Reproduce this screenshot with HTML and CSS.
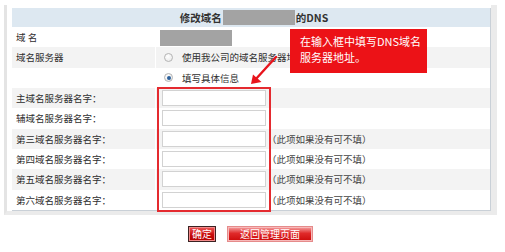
FILE: index.html
```html
<!DOCTYPE html>
<html lang="zh-CN">
<head>
<meta charset="utf-8">
<title>修改域名的DNS</title>
<link rel="stylesheet" href="styles.css">
</head>
<body>
<div class="page">
  <div class="frame">
    <div class="dns">
      <div class="head">修改域名<span class="redact head-redact"></span>的DNS</div>

      <div class="lbl">域 名</div>
      <div class="val"><span class="redact name-redact"></span></div>

      <div class="lbl alt">域名服务器</div>
      <div class="val alt"><span class="radio"></span>使用我公司的域名服务器地址</div>

      <div class="lbl"></div>
      <div class="val"><span class="radio on"></span>填写具体信息</div>

      <div class="lbl alt">主域名服务器名字：</div>
      <div class="val alt"><input class="field" type="text"></div>

      <div class="lbl">辅域名服务器名字：</div>
      <div class="val"><input class="field" type="text"></div>

      <div class="lbl alt">第三域名服务器名字：</div>
      <div class="val alt"><input class="field" type="text"><span class="hint">（此项如果没有可不填）</span></div>

      <div class="lbl">第四域名服务器名字：</div>
      <div class="val"><input class="field" type="text"><span class="hint">（此项如果没有可不填）</span></div>

      <div class="lbl alt">第五域名服务器名字：</div>
      <div class="val alt"><input class="field" type="text"><span class="hint">（此项如果没有可不填）</span></div>

      <div class="lbl">第六域名服务器名字：</div>
      <div class="val"><input class="field" type="text"><span class="hint">（此项如果没有可不填）</span></div>
    </div>
  </div>

  <div class="actions">
    <button class="btn btn-ok" type="button">确定</button>
    <button class="btn btn-back" type="button">返回管理页面</button>
  </div>

  <div class="highlight"></div>
  <div class="callout">在输入框中填写DNS域名<br>服务器地址。</div>
  <svg class="arrow" width="36" height="36" viewBox="0 0 36 36">
    <line x1="31" y1="5" x2="10" y2="28" stroke="#e8141c" stroke-width="2.4" stroke-linecap="round"/>
    <polygon points="6,32 16.5,30 8,22.5" fill="#e8141c"/>
  </svg>
</div>
</body>
</html>
```

FILE: styles.css
```css
* { box-sizing: border-box; }

html, body {
  margin: 0;
  padding: 0;
  background: #ffffff;
}

body {
  font-family: "Noto Sans CJK SC", "Noto Sans", sans-serif;
  font-size: 9.5px;
  color: #2e2e2e;
  width: 505px;
  height: 252px;
  overflow: hidden;
}

.page {
  position: relative;
  width: 505px;
  height: 252px;
  padding-top: 5px;
}

.frame {
  margin-left: 4px;
  width: 493px;
  border-left: 3px solid #e4e4e4;
  border-right: 6px solid #ebebeb;
  border-bottom: 4px solid #ebebeb;
  padding: 3px 0 0 5px;
}

.dns {
  display: grid;
  grid-template-columns: 143px 1fr;
  grid-template-rows: 19px repeat(9, 20.33px);
  column-gap: 1px;
  background: #ffffff;
  border-right: 1px solid #c9d0d7;
  border-bottom: 1px solid #c9d0d7;
}

.head {
  grid-column: 1 / 3;
  background: #dde8f1;
  display: flex;
  align-items: center;
  justify-content: center;
  font-weight: bold;
  font-size: 10.5px;
  color: #333333;
  padding-left: 6px;
}

.redact {
  display: inline-block;
  background: #a3a3a3;
}

.head-redact {
  width: 72px;
  height: 15px;
  margin: 0 1px;
}

.name-redact {
  width: 72px;
  height: 16px;
  margin-top: 1px;
}

.lbl, .val {
  display: flex;
  align-items: center;
  background: #ffffff;
  white-space: nowrap;
  overflow: hidden;
}

.lbl { padding-left: 4px; }
.val { padding-left: 4px; }

.alt { background: #f3f3f3; }

.radio {
  display: inline-block;
  width: 9px;
  height: 9px;
  border-radius: 50%;
  border: 1px solid #b4b4b4;
  background: radial-gradient(circle at 40% 35%, #ffffff 0%, #e6e6e6 100%);
  margin-left: 4px;
  margin-right: 9px;
  position: relative;
}

.radio.on::after {
  content: "";
  position: absolute;
  left: 1.5px;
  top: 1.5px;
  width: 4px;
  height: 4px;
  border-radius: 50%;
  background: #2a5f9a;
}

.field {
  width: 104px;
  height: 16px;
  margin: 0 0 0 2px;
  border: 1px solid #d2d2d2;
  background: #ffffff;
  padding: 0;
}

.hint {
  margin-left: 1px;
  color: #444444;
}

.actions {
  display: flex;
  justify-content: center;
  gap: 11px;
  margin-top: 11px;
  padding-right: 4px;
}

.btn {
  height: 16px;
  padding: 0;
  font-family: "Noto Sans CJK SC", "Noto Sans", sans-serif;
  font-size: 10px;
  line-height: 14px;
  color: #ffffff;
  cursor: pointer;
}

.btn-ok {
  width: 28px;
  border: 1px solid #3b2222;
  background: linear-gradient(#ee5a5a, #c80c0c 55%, #b30000);
  box-shadow: inset 0 0 0 1px #f38a8a;
}

.btn-back {
  width: 86px;
  border: 1px solid #e58b8b;
  background: linear-gradient(#f6a5a5, #e02a2a 45%, #cc0a0a);
  box-shadow: inset 0 0 0 1px #f7b9b9;
}

.highlight {
  position: absolute;
  left: 157px;
  top: 87px;
  width: 114px;
  height: 125px;
  border: 2px solid #e42a2f;
}

.callout {
  position: absolute;
  left: 290px;
  top: 29px;
  width: 137px;
  height: 44px;
  background: #ec1217;
  color: #ffffff;
  font-size: 11px;
  line-height: 16px;
  padding: 4px 0 0 10px;
  white-space: nowrap;
}

.arrow {
  position: absolute;
  left: 245px;
  top: 52px;
}
```
